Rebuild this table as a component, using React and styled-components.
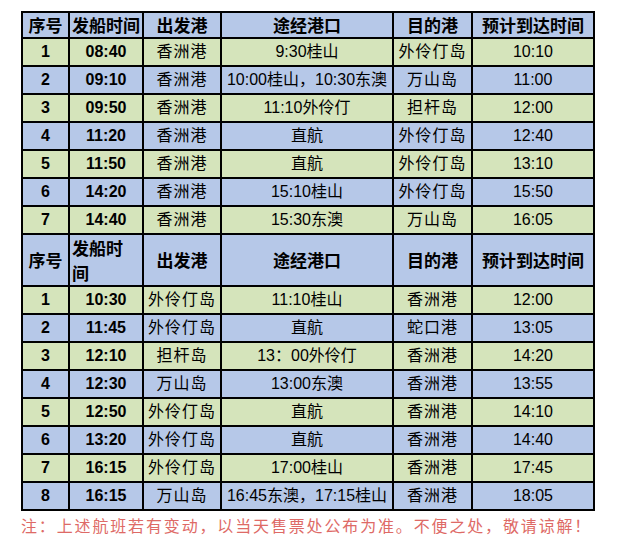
import React from 'react';
import styled, { createGlobalStyle } from 'styled-components';

const GlobalStyle = createGlobalStyle`
  html, body {
    margin: 0;
    padding: 0;
    background: #ffffff;
  }
  body {
    font-family: "Liberation Sans", Arial, "Noto Sans CJK SC", sans-serif;
    color: #000000;
  }
`;

const BLUE = '#b6c8e8';
const GREEN = '#d5e4bb';

const Page = styled.div`
  width: 619px;
  height: 551px;
  padding: 11px 0 0 21px;
  box-sizing: border-box;
`;

const Table = styled.table`
  width: 572px;
  table-layout: fixed;
  border-collapse: collapse;
  border: 2px solid #000;
`;

const Row = styled.tr`
  height: ${(p) => p.$height || 28}px;
  background: ${(p) => (p.$tone === 'green' ? GREEN : BLUE)};
`;

const Th = styled.th`
  border: 2px solid #000;
  padding: ${(p) => (p.$align === 'left' ? '0 0 0 2px' : '0')};
  font-family: "Noto Sans CJK SC", sans-serif;
  font-weight: 700;
  font-size: 17px;
  line-height: ${(p) => p.$lh || 20}px;
  text-align: ${(p) => p.$align || 'center'};
  vertical-align: middle;
  white-space: nowrap;
`;

const Td = styled.td`
  border: 2px solid #000;
  padding: 0 1px;
  font-family: "Liberation Sans", Arial, "Noto Sans CJK SC", sans-serif;
  font-size: 16px;
  font-weight: ${(p) => (p.$bold ? 700 : 400)};
  letter-spacing: ${(p) => (p.$spaced ? '1px' : '0')};
  text-align: center;
  vertical-align: middle;
  white-space: nowrap;
  line-height: 20px;
`;

const Note = styled.div`
  margin-top: 2px;
  font-family: "Noto Sans CJK SC", serif;
  font-size: 16px;
  letter-spacing: 1.85px;
  color: #de6a66;
  white-space: nowrap;
`;

const outbound = [
  ['1', '08:40', '香洲港', '9:30桂山', '外伶仃岛', '10:10'],
  ['2', '09:10', '香洲港', '10:00桂山，10:30东澳', '万山岛', '11:00'],
  ['3', '09:50', '香洲港', '11:10外伶仃', '担杆岛', '12:00'],
  ['4', '11:20', '香洲港', '直航', '外伶仃岛', '12:40'],
  ['5', '11:50', '香洲港', '直航', '外伶仃岛', '13:10'],
  ['6', '14:20', '香洲港', '15:10桂山', '外伶仃岛', '15:50'],
  ['7', '14:40', '香洲港', '15:30东澳', '万山岛', '16:05'],
];

const inbound = [
  ['1', '10:30', '外伶仃岛', '11:10桂山', '香洲港', '12:00'],
  ['2', '11:45', '外伶仃岛', '直航', '蛇口港', '13:05'],
  ['3', '12:10', '担杆岛', '13：00外伶仃', '香洲港', '14:20'],
  ['4', '12:30', '万山岛', '13:00东澳', '香洲港', '13:55'],
  ['5', '12:50', '外伶仃岛', '直航', '香洲港', '14:10'],
  ['6', '13:20', '外伶仃岛', '直航', '香洲港', '14:40'],
  ['7', '16:15', '外伶仃岛', '17:00桂山', '香洲港', '17:45'],
  ['8', '16:15', '万山岛', '16:45东澳，17:15桂山', '香洲港', '18:05'],
];

function DataRow({ cells, index }) {
  return (
    <Row $tone={index % 2 === 0 ? 'green' : 'blue'}>
      <Td $bold>{cells[0]}</Td>
      <Td $bold>{cells[1]}</Td>
      <Td $spaced>{cells[2]}</Td>
      <Td>{cells[3]}</Td>
      <Td $spaced>{cells[4]}</Td>
      <Td>{cells[5]}</Td>
    </Row>
  );
}

export default function App() {
  return (
    <Page>
      <GlobalStyle />
      <Table>
        <colgroup>
          <col style={{ width: 47 }} />
          <col style={{ width: 74 }} />
          <col style={{ width: 78 }} />
          <col style={{ width: 172 }} />
          <col style={{ width: 79 }} />
          <col style={{ width: 122 }} />
        </colgroup>
        <tbody>
          <Row $height={26}>
            <Th>序号</Th>
            <Th>发船时间</Th>
            <Th>出发港</Th>
            <Th>途经港口</Th>
            <Th>目的港</Th>
            <Th>预计到达时间</Th>
          </Row>
          {outbound.map((r, i) => (
            <DataRow key={'o' + i} cells={r} index={i} />
          ))}
          <Row $height={52}>
            <Th>序号</Th>
            <Th $align="left" $lh={25}>发船时<br />间</Th>
            <Th>出发港</Th>
            <Th>途经港口</Th>
            <Th>目的港</Th>
            <Th>预计到达时间</Th>
          </Row>
          {inbound.map((r, i) => (
            <DataRow key={'i' + i} cells={r} index={i} />
          ))}
        </tbody>
      </Table>
      <Note>注：上述航班若有变动，以当天售票处公布为准。不便之处，敬请谅解！</Note>
    </Page>
  );
}
